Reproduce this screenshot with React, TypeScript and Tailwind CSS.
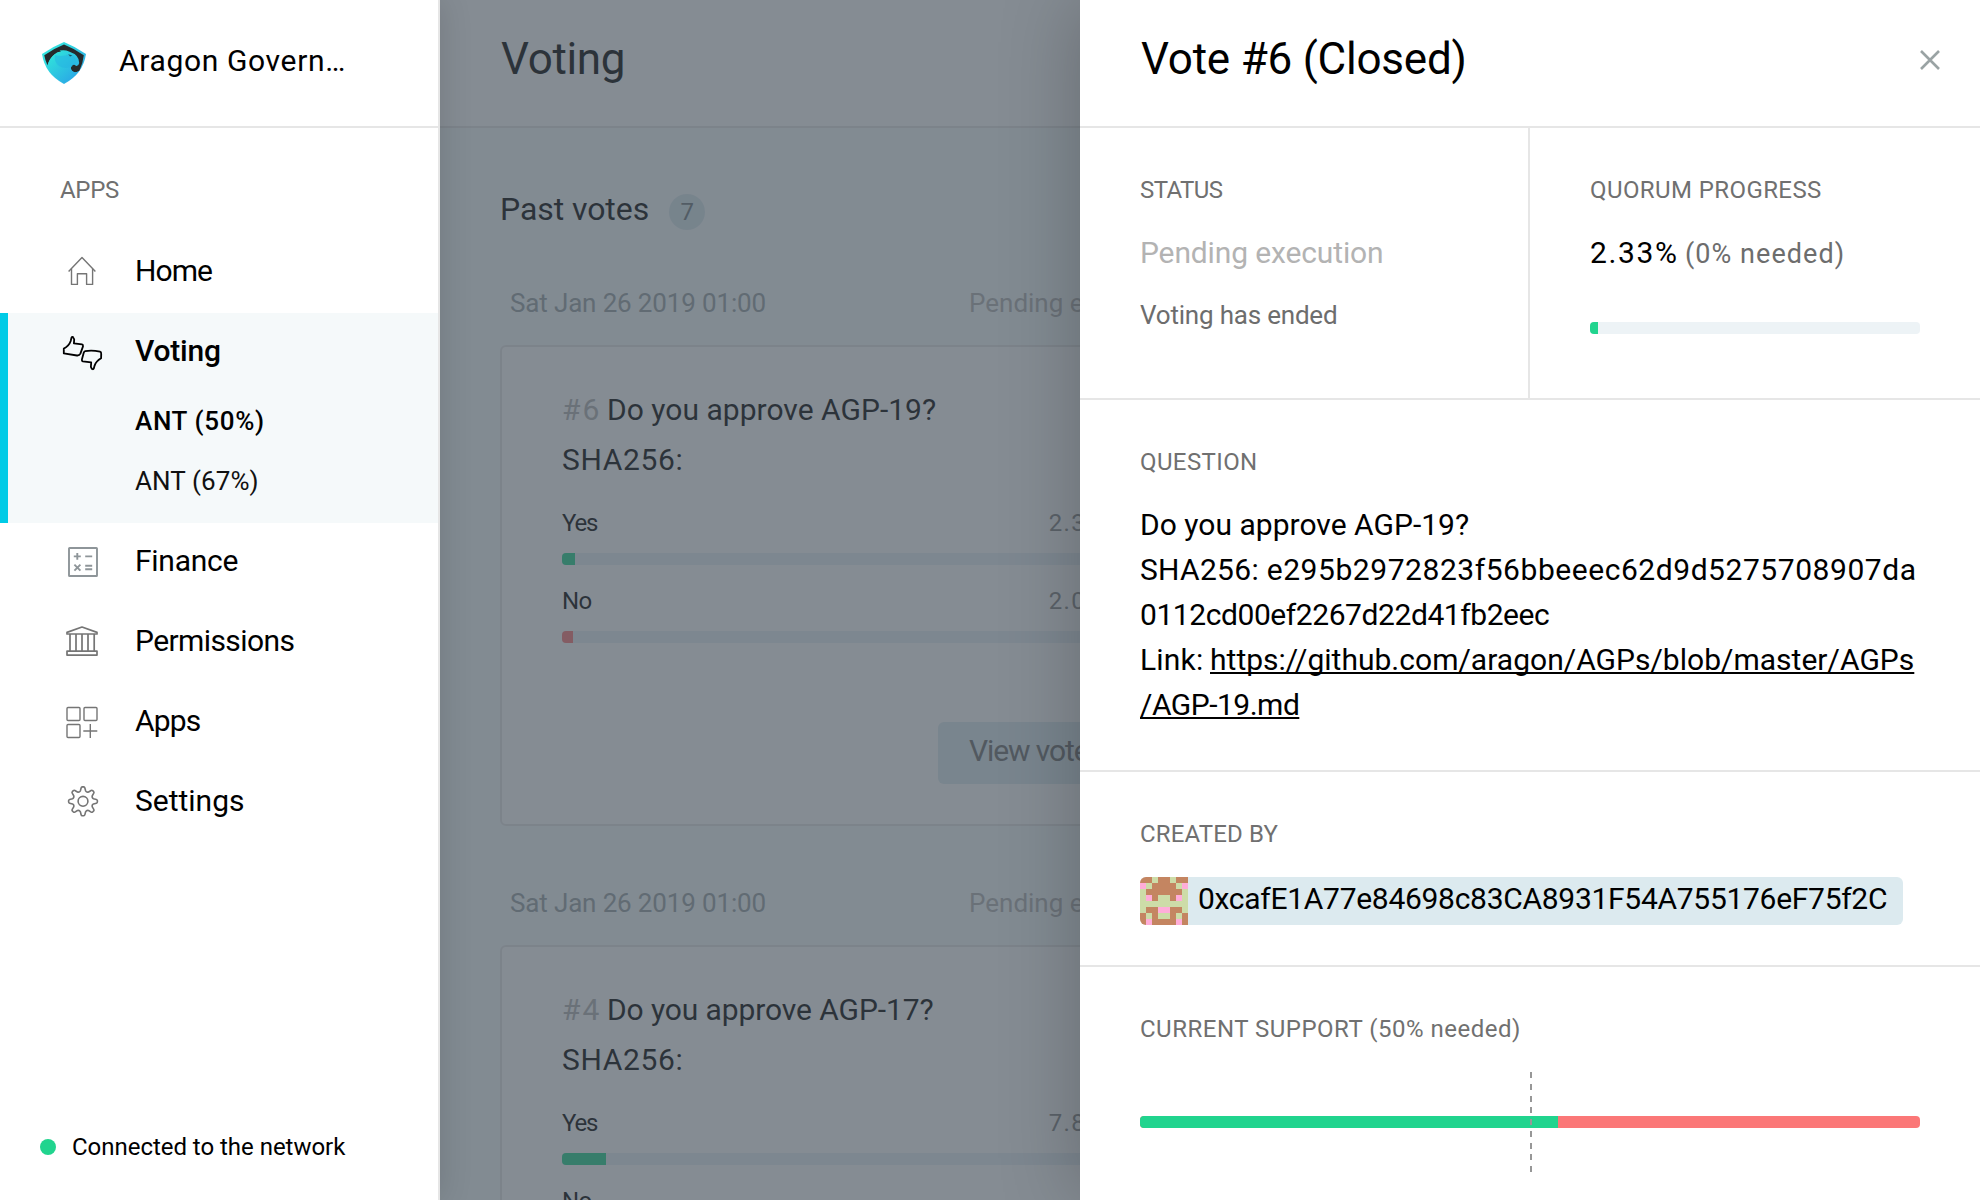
import React from "react";

type IconProps = { children: React.ReactNode; color?: string; stroke?: number };

function IconBox({ children, color = "#757575", stroke = 1.4 }: IconProps) {
  return (
    <svg
      width="44"
      height="44"
      viewBox="0 0 44 44"
      fill="none"
      stroke={color}
      strokeWidth={stroke}
      strokeLinejoin="round"
      className="shrink-0"
    >
      {children}
    </svg>
  );
}

const HomeIcon = () => (
  <IconBox>
    <path d="M8.6 20.4L22 6.4L35.4 20.4" />
    <path d="M11.5 17.8V33.4H17.4V22.8H26.6V33.4H32.6V17.8" />
  </IconBox>
);

const VotingIcon = () => (
  <IconBox color="#000" stroke={1.8}>
    <path d="M3.8 17.6C7 16 9.7 13 10.7 10L11.5 6.6C12 5.6 13.2 5.8 13.4 6.8L14.2 8.4L13.9 12.4L22 13.4Q23.3 13.8 23 15.4L20.4 22.6Q19.3 24.7 17 24.5L3.8 22.4Z" />
    <path d="M25.2 20.2Q32 19 40 20.7Q41.4 21 41.2 23L41.1 27.3C38 29 35.6 31.6 34.6 34.6L33.8 37.4C33.4 38.6 32 38.4 31.6 37.4L30.9 35.8L31.2 31.4L22.8 30.4Q21.6 30 21.9 28.4L23.8 21.6Q24.2 20.4 25.2 20.2Z" />
  </IconBox>
);

const FinanceIcon = () => (
  <IconBox color="#8e9599" stroke={1.9}>
    <rect x="9" y="7" width="28" height="28" rx="0.6" />
    <path d="M13.8 15.4H20.8M17.3 12V18.8M25.2 15.4H32.2M25.2 24.7H32.2M25.2 28.3H32.2M14.4 23.6L20.4 29.6M20.4 23.6L14.4 29.6" />
  </IconBox>
);

const PermissionsIcon = () => (
  <IconBox stroke={1.7}>
    <path d="M7 13V11.4L22 6L37 11.4V13Z" />
    <path d="M10 13V30M16 13V30M22 13V30M28 13V30M34.2 13V30" />
    <rect x="7" y="30.2" width="30" height="3.9" />
  </IconBox>
);

const AppsIcon = () => (
  <IconBox>
    <rect x="7" y="6.5" width="13" height="13" rx="1" />
    <rect x="24" y="6.5" width="13" height="13" rx="1" />
    <rect x="7" y="23.5" width="13" height="13" rx="1" />
    <path d="M30.3 23V37M23.3 30H37.3" />
  </IconBox>
);

function gearPath(cx: number, cy: number, inner: number, outer: number) {
  const pts: string[] = [];
  const at = (deg: number, r: number) => {
    const a = ((deg - 90) * Math.PI) / 180;
    return `${(cx + r * Math.cos(a)).toFixed(2)} ${(cy + r * Math.sin(a)).toFixed(2)}`;
  };
  for (let i = 0; i < 8; i++) {
    const c = i * 45;
    pts.push(`${i === 0 ? "M" : "L"}${at(c - 14, inner + 0.4)}`);
    pts.push(`L${at(c - 8, outer - 0.9)}`);
    pts.push(`Q${at(c - 6.5, outer)} ${at(c - 3, outer)}`);
    pts.push(`L${at(c + 3, outer)}`);
    pts.push(`Q${at(c + 6.5, outer)} ${at(c + 8, outer - 0.9)}`);
    pts.push(`L${at(c + 14, inner + 0.4)}`);
    pts.push(`Q${at(c + 22.5, inner - 1)} ${at(c + 31, inner + 0.4)}`);
  }
  return pts.join("") + "Z";
}

const SettingsIcon = () => (
  <IconBox stroke={1.6}>
    <path d={gearPath(23, 20.3, 10.4, 14.4)} />
    <circle cx="23" cy="20.3" r="4.9" />
  </IconBox>
);

const Logo = () => (
  <svg width="44" height="42" viewBox="0 0 44 42" className="shrink-0">
    <defs>
      <linearGradient id="shield" x1="0" y1="0" x2="1" y2="0.9">
        <stop offset="0" stopColor="#3af0e0" />
        <stop offset="0.45" stopColor="#2fcfe0" />
        <stop offset="1" stopColor="#2f9fe8" />
      </linearGradient>
      <linearGradient id="body" x1="0.1" y1="0.2" x2="0.8" y2="1">
        <stop offset="0" stopColor="#2fe0dc" />
        <stop offset="1" stopColor="#2aa6e6" />
      </linearGradient>
    </defs>
    <path d="M22 0Q33 4.5 44 12Q41 32 22 42Q3 32 0 12Q11 4.5 22 0Z" fill="url(#shield)" />
    <path d="M22 2.6Q32.5 6.8 41.8 13.3Q41 21 37.5 28.6Q34 31.5 30.8 29.6Q27.6 27 29.7 23.6Q31.5 21.4 33.8 23.6Q36 20 33.5 15.6L24 10L13 12Q7 17 5.6 23.6Q3 18 2.3 13.3Q11.5 6.8 22 2.6Z" fill="#252a2c" />
    <path d="M5.4 23.6Q7.4 16 12.6 12.2Q15 9.6 19 9.6L17.6 8.6Q23 7.6 27 9.4Q37.6 13 37.2 21Q36.6 24.4 33.8 23.8Q33 21.6 30.4 22.8Q28.2 25 29.4 28.2Q32 31.6 36.6 29.6Q31.4 36.8 22 40.8Q9.8 34.6 5.4 23.6Z" fill="url(#body)" />
    <path d="M13 13Q11.6 20 17 24Q23 27.6 30 24.6Q31.6 21.4 34 22Q35 14.6 27.6 12Q20 15.6 13 13Z" fill="#27b4e2" opacity="0.55" />
    <path d="M26.2 12.2L30.4 13.6L28 14.4Z" fill="#1c5a68" />
  </svg>
);

type Item = { label: string; icon: React.ReactNode; track: string };

function MenuRow({ label, icon, track, active = false }: Item & { active?: boolean }) {
  return (
    <div className="flex h-20 items-center">
      {icon}
      <span
        className={
          "ml-[31px] pb-1 text-[30px] leading-10 text-black " +
          (active ? "font-medium " : "font-normal ") +
          track
        }
      >
        {label}
      </span>
    </div>
  );
}

const lowerItems: Item[] = [
  { label: "Finance", icon: <FinanceIcon />, track: "tracking-[-0.26px]" },
  { label: "Permissions", icon: <PermissionsIcon />, track: "tracking-[-0.59px]" },
  { label: "Apps", icon: <AppsIcon />, track: "tracking-[-0.8px]" },
  { label: "Settings", icon: <SettingsIcon />, track: "tracking-[-0.01px]" },
];

function Sidebar() {
  return (
    <aside className="relative z-10 flex h-full w-[440px] shrink-0 flex-col border-r-2 border-[#e6e6e6] bg-white shadow-[2px_0_30px_rgba(0,0,0,0.12)]">
      <header className="flex h-32 items-center border-b-2 border-[#e6e6e6] pl-[42px]">
        <Logo />
        <span className="ml-[33px] pb-1 text-[30px] leading-10 tracking-[0.65px]">Aragon Govern…</span>
      </header>
      <h2 className="mt-[42px] mb-[23px] pl-[60px] text-2xl leading-10 tracking-[-0.3px] text-[#707070]">APPS</h2>
      <nav>
        <div className="pl-[60px]">
          <MenuRow label="Home" icon={<HomeIcon />} track="tracking-[-0.94px]" />
        </div>
        <div className="h-[210px] border-l-8 border-[#00cbe6] bg-[#f5f9fa] pl-[52px]">
          <MenuRow label="Voting" icon={<VotingIcon />} track="tracking-[-0.21px]" active />
          <div className="-mt-0.5 pl-[75px] text-[26px] leading-[60px]">
            <div className="font-medium tracking-[0.65px]">ANT (50%)</div>
            <div className="tracking-[0.1px] text-[#111]">ANT (67%)</div>
          </div>
        </div>
        <div className="pl-[60px]">
          {lowerItems.map((item) => (
            <MenuRow key={item.label} {...item} />
          ))}
        </div>
      </nav>
      <footer className="mt-auto flex items-center gap-4 pb-[33px] pl-10">
        <span className="size-4 rounded-full bg-[#21d48e]" />
        <span className="text-2xl leading-10 tracking-[-0.03px]">Connected to the network</span>
      </footer>
    </aside>
  );
}

type Vote = { id: string; title: string; yes: string; no: string; yesW: string; noW: string; track: string };

const votes: Vote[] = [
  { id: "#6", title: "Do you approve AGP-19?", yes: "2.33%", no: "2.01%", yesW: "w-[13px]", noW: "w-[11px]", track: "tracking-[0.02px]" },
  { id: "#4", title: "Do you approve AGP-17?", yes: "7.89%", no: "0%", yesW: "w-[44px]", noW: "w-0", track: "tracking-[-0.1px]" },
];

function Tally({ label, value, fill, track }: { label: string; value: string; fill: string; track: string }) {
  return (
    <div>
      <div className="flex justify-between text-2xl leading-[30px]">
        <span className={track}>{label}</span>
        <span className="tracking-[1.4px] text-[#888]">{value}</span>
      </div>
      <div className="mt-[15px] flex h-3 overflow-hidden rounded-[4px] bg-[#e9f1f6]">
        <div className={"h-full " + fill} />
      </div>
    </div>
  );
}

function VoteCard({ vote }: { vote: Vote }) {
  return (
    <article className="mb-[57px] w-[682px]">
      <div className="flex justify-between pr-[9px] pl-2.5 text-[26px] leading-10">
        <span className="tracking-[-0.15px] text-[#98a2a4]">Sat Jan 26 2019 01:00</span>
        <span className="w-[204px] whitespace-nowrap text-[#b3b3b3]">Pending execution</span>
      </div>
      <div className="mt-[22px] flex h-[481px] flex-col rounded-[6px] border-2 border-[#e6e6e6] bg-white px-[60px] pt-[38px]">
        <div className="text-[30px] leading-[50px]">
          <div className="flex">
            <span className="w-[45px] tracking-[2px] text-[#b3b3b3]">{vote.id}</span>
            <span className={vote.track}>{vote.title}</span>
          </div>
          <div className="tracking-[0.65px]">SHA256:</div>
        </div>
        <div className="mt-[23px] flex flex-col gap-[21px]">
          <Tally label="Yes" value={vote.yes} fill={"bg-[#21d48e] " + vote.yesW} track="tracking-[-1.2px]" />
          <Tally label="No" value={vote.no} fill={"bg-[#fb7777] " + vote.noW} track="tracking-[-0.6px]" />
        </div>
        <div className="mt-[79px] flex h-[62px] w-[182px] items-center self-end rounded-[6px] bg-[#dceaef] pb-1.5 pl-[31px] text-[30px] tracking-[-1.1px] whitespace-nowrap text-[#6d6d6d]">
          View vote
        </div>
      </div>
    </article>
  );
}

function Main() {
  return (
    <main className="relative h-full flex-1 overflow-hidden bg-[#f7fbfd]">
      <header className="flex h-32 items-center border-b-2 border-[#e6e6e6] bg-white pb-2 pl-[61px]">
        <h1 className="text-[44px] leading-[60px] tracking-[-0.36px]">Voting</h1>
      </header>
      <div className="pt-[66px] pl-[60px]">
        <div className="mb-[53px] flex h-9 items-center">
          <h2 className="pb-1.5 text-[32px] leading-9 tracking-[-0.07px]">Past votes</h2>
          <span className="ml-5 flex size-9 items-center justify-center rounded-full bg-[#d8e7ec] text-2xl text-[#6d777b]">7</span>
        </div>
        {votes.map((v) => (
          <VoteCard key={v.id} vote={v} />
        ))}
      </div>
      <div className="absolute inset-0 bg-[rgba(68,79,89,0.65)]" />
    </main>
  );
}

const identicon = ["BBGBBGBB", "PGBBBBGP", "GBBBBBBG", "GPBGGBPG", "GGGGGGGG", "GBBPPBBG", "BGBGGBGB", "BPBBBBPB"];
const cellColor: Record<string, string> = { B: "bg-[#c48561]", P: "bg-[#ffadd9]", G: "bg-[#cddca8]" };

function Label({ children, track }: { children: React.ReactNode; track: string }) {
  return <h3 className={"text-2xl leading-10 whitespace-nowrap text-[#707070] " + track}>{children}</h3>;
}

function Panel() {
  return (
    <section className="absolute top-0 right-0 z-20 h-full w-[900px] bg-white shadow-[-4px_0_72px_rgba(0,0,0,0.22)]">
      <header className="flex h-32 items-center justify-between border-b-2 border-[#e6e6e6] pr-10 pl-[61px]">
        <h1 className="pb-2 text-[44px] leading-[60px] tracking-[-0.22px]">Vote #6 (Closed)</h1>
        <svg width="20" height="20" viewBox="0 0 20 20" className="mb-1.5" stroke="#9aa3a4" strokeWidth="2.6">
          <path d="M1 1L19 19M19 1L1 19" />
        </svg>
      </header>
      <div className="flex h-[272px] border-b-2 border-[#e6e6e6]">
        <div className="w-[450px] border-r-2 border-[#e6e6e6] pt-[42px] pl-[60px]">
          <Label track="tracking-[-0.6px]">STATUS</Label>
          <div className="mt-[23px] text-[30px] leading-10 tracking-[-0.13px] text-[#b3b3b3]">Pending execution</div>
          <div className="mt-[22px] text-[26px] leading-10 tracking-[-0.2px] text-[#6d6d6d]">Voting has ended</div>
        </div>
        <div className="w-[450px] px-[60px] pt-[42px]">
          <Label track="tracking-[0.41px]">QUORUM PROGRESS</Label>
          <div className="mt-[23px] flex leading-10">
            <span className="w-[95px] text-[30px] tracking-[1.6px]">2.33%</span>
            <span className="pt-px text-[27px] tracking-[1.05px] whitespace-nowrap text-[#6d6d6d]">(0% needed)</span>
          </div>
          <div className="mt-12 h-3 overflow-hidden rounded-[4px] bg-[#edf3f6]">
            <div className="h-full w-2 bg-[#21d48e]" />
          </div>
        </div>
      </div>
      <div className="h-[372px] border-b-2 border-[#e6e6e6] px-[60px] pt-[42px]">
        <Label track="tracking-[0.4px]">QUESTION</Label>
        <div className="mt-5 text-[30px] leading-[45px] whitespace-nowrap">
          <div className="tracking-[0.02px]">Do you approve AGP-19?</div>
          <div>
            <span className="tracking-[0.3px]">SHA256: </span>
            <span className="tracking-[0.55px]">e295b2972823f56bbeeec62d9d5275708907da</span>
          </div>
          <div className="tracking-[-0.43px]">0112cd00ef2267d22d41fb2eec</div>
          <div className="flex">
            <span className="w-[70px] tracking-[0.19px]">Link:</span>
            <a className="tracking-[0.02px] underline decoration-2 underline-offset-2 [text-decoration-skip-ink:none]">
              https://github.com/aragon/AGPs/blob/master/AGPs
            </a>
          </div>
          <div>
            <a className="tracking-[-0.5px] underline decoration-2 underline-offset-2 [text-decoration-skip-ink:none]">/AGP-19.md</a>
          </div>
        </div>
      </div>
      <div className="h-[195px] border-b-2 border-[#e6e6e6] px-[60px] pt-[42px]">
        <Label track="tracking-[0.15px]">CREATED BY</Label>
        <div className="mt-[23px] flex h-12 w-[763px] overflow-hidden rounded-[6px] bg-[#dceaef]">
          <div className="grid size-12 shrink-0 grid-cols-8">
            {identicon
              .join("")
              .split("")
              .map((c, i) => (
                <span key={i} className={"size-1.5 " + cellColor[c]} />
              ))}
          </div>
          <span className="pl-2.5 text-[30px] leading-[44px] tracking-[-0.29px] whitespace-nowrap">
            0xcafE1A77e84698c83CA8931F54A755176eF75f2C
          </span>
        </div>
      </div>
      <div className="px-[60px] pt-[42px]">
        <Label track="tracking-[0.5px]">CURRENT SUPPORT (50% needed)</Label>
        <div className="relative mt-[23px] flex h-[100px] items-center">
          <div className="flex h-3 w-full overflow-hidden rounded-[4px] bg-[#fb7777]">
            <div className="h-full w-[418px] bg-[#21d48e]" />
          </div>
          <div className="absolute top-0 left-[390px] h-full w-0.5 bg-[repeating-linear-gradient(to_bottom,#979797_0_6px,transparent_6px_11.75px)]" />
        </div>
      </div>
    </section>
  );
}

export default function App() {
  return (
    <div className="relative flex h-[1200px] w-[1980px] overflow-hidden bg-white font-['Roboto',sans-serif] text-black">
      <Sidebar />
      <Main />
      <Panel />
    </div>
  );
}
